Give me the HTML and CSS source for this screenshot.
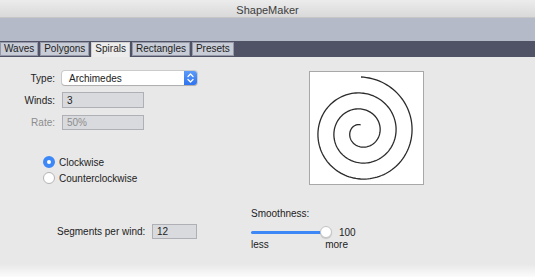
FILE: index.html
```html
<!DOCTYPE html>
<html lang="en">
<head>
<meta charset="UTF-8" />
<title>ShapeMaker</title>
<link rel="stylesheet" href="styles.css">
</head>
<body>

<div class="window">
  <div class="titlebar">ShapeMaker</div>
  <div class="toolbar"></div>

  <div class="tabbar">
    <div class="tab">Waves</div>
    <div class="tab">Polygons</div>
    <div class="tab active">Spirals</div>
    <div class="tab">Rectangles</div>
    <div class="tab">Presets</div>
  </div>

  <div class="content">
    <div class="top">
      <div class="settings">
        <div class="field">
          <label>Type:</label>
          <div class="select">
            <span class="select-value">Archimedes</span>
            <span class="select-arrows">
              <svg width="13" height="14" viewBox="0 0 13 14">
                <path d="M4 5.5 L6.5 3 L9 5.5 M4 8.5 L6.5 11 L9 8.5" fill="none" stroke="#fff" stroke-width="1.3" stroke-linecap="round" stroke-linejoin="round"/>
              </svg>
            </span>
          </div>
        </div>
        <div class="field">
          <label>Winds:</label>
          <div class="textbox winds">3</div>
        </div>
        <div class="field disabled">
          <label>Rate:</label>
          <div class="textbox rate">50%</div>
        </div>

        <div class="radios">
          <div class="radio checked"><span class="dot"></span>Clockwise</div>
          <div class="radio"><span class="dot"></span>Counterclockwise</div>
        </div>
      </div>

      <div class="preview">
        <svg width="113" height="112">
          <polyline id="spiral" fill="none" stroke="#2b2b2b" stroke-width="1.3" />
        </svg>
      </div>
    </div>

    <div class="bottom">
      <div class="segments">
        <label>Segments per wind:</label>
        <div class="textbox seg">12</div>
      </div>

      <div class="smooth">
        <div class="smooth-label">Smoothness:</div>
        <div class="slider-row">
          <div class="track"></div>
          <div class="thumb"></div>
          <span class="slider-value">100</span>
        </div>
        <div class="scale">
          <span>less</span>
          <span>more</span>
        </div>
      </div>
    </div>
  </div>

  <div class="fade"></div>
</div>

<script>
// Archimedes spiral, 3 winds, drawn from the outside in
const cx = 51, cy = 60, outer = 55, perWind = 16;
const pts = [];
for (let t = 0; t <= 6 * Math.PI; t += 0.05) {
  const r = outer - perWind * t / (2 * Math.PI);
  const a = -Math.PI / 2 + t;
  pts.push((cx + r * Math.cos(a)).toFixed(2) + "," + (cy + r * Math.sin(a)).toFixed(2));
}
document.getElementById("spiral").setAttribute("points", pts.join(" "));
</script>

</body>
</html>
```

FILE: styles.css
```css
body {
  margin: 0;
  font-family: "Liberation Sans", Arial, sans-serif;
  font-size: 10px;
  color: #222;
  background: #fff;
}

.window {
  width: 535px;
  height: 277px;
  display: flex;
  flex-direction: column;
}

.titlebar {
  height: 18px;
  box-sizing: border-box;
  padding-top: 2px;
  line-height: 16px;
  text-align: center;
  font-size: 11px;
  color: #3c3c3c;
  background: linear-gradient(#ececec, #d9d9d9);
  border-bottom: 1px solid #c6c6c6;
}

.toolbar {
  height: 23px;
  background: #b5bac9;
}

.tabbar {
  height: 16px;
  box-sizing: border-box;
  padding-top: 1px;
  display: flex;
  align-items: flex-start;
  gap: 2px;
  background: #4f5365;
}

.tab {
  height: 14px;
  box-sizing: border-box;
  padding: 0 3px;
  line-height: 12px;
  background: #c8ccd6;
  border: 1px solid #9599a8;
  color: #1e1e1e;
}

.tab.active {
  height: 15px;
  background: #ececec;
  border-color: #d0d0d0;
  border-bottom: none;
}

.content {
  flex: 0 0 207px;
  box-sizing: border-box;
  padding-top: 14px;
  background: #e8e8e8;
}

.fade {
  flex: 1;
  background: linear-gradient(#e8e8e8, #fbfbfb);
}

.top {
  display: flex;
  align-items: flex-start;
}

.settings {
  width: 197px;
}

.field {
  display: flex;
  align-items: center;
  margin-bottom: 7px;
}

.field label {
  width: 55px;
  margin-right: 7px;
  text-align: right;
}

.select {
  width: 135px;
  height: 14px;
  display: flex;
  align-items: center;
  background: #fff;
  border-radius: 3px;
  box-shadow: 0 0 0 1px rgba(0, 0, 0, 0.12), 0 1px 1px rgba(0, 0, 0, 0.15);
}

.select-value {
  flex: 1;
  padding-left: 7px;
}

.select-arrows {
  width: 13px;
  height: 14px;
  display: flex;
  border-radius: 0 3px 3px 0;
  background: linear-gradient(#5c9bf9, #2f73ef);
}

.textbox {
  box-sizing: border-box;
  padding-left: 4px;
  background: #d9dadd;
  border: 1px solid #aeb0b5;
  display: flex;
  align-items: center;
}

.winds {
  width: 82px;
  height: 16px;
}

.rate {
  width: 82px;
  height: 15px;
}

.disabled label,
.disabled .textbox {
  color: #8d8d8d;
}

.radios {
  margin-top: 24px;
  padding-left: 43px;
}

.radio {
  height: 16px;
  display: flex;
  align-items: center;
  gap: 4px;
}

.dot {
  width: 12px;
  height: 12px;
  box-sizing: border-box;
  border-radius: 50%;
  background: #fff;
  border: 1px solid #b4b4b4;
}

.radio.checked .dot {
  border: 4px solid #3d87f6;
  background: #fff;
}

.preview {
  margin-left: 112px;
  width: 115px;
  height: 114px;
  box-sizing: border-box;
  border: 1px solid #a8a8a8;
  background: #fff;
}

.preview svg {
  display: block;
}

.bottom {
  display: flex;
  align-items: flex-start;
}

.segments {
  display: flex;
  align-items: center;
  margin-left: 57px;
  margin-top: 38px;
  width: 140px;
}

.segments label {
  flex: 1;
}

.seg {
  width: 45px;
  height: 15px;
}

.smooth {
  margin-left: 54px;
  margin-top: 21px;
}

.smooth-label {
  height: 14px;
  line-height: 14px;
}

.slider-row {
  margin-top: 4px;
  height: 14px;
  display: flex;
  align-items: center;
}

.track {
  width: 72px;
  height: 3px;
  border-radius: 2px;
  background: #3d87f6;
}

.thumb {
  width: 12px;
  height: 12px;
  margin-left: -3px;
  box-sizing: border-box;
  border-radius: 50%;
  background: #fff;
  border: 1px solid #c4c4c4;
  box-shadow: 0 1px 1px rgba(0, 0, 0, 0.15);
}

.slider-value {
  margin-left: 7px;
}

.scale {
  width: 97px;
  height: 12px;
  line-height: 12px;
  display: flex;
  justify-content: space-between;
}
```
